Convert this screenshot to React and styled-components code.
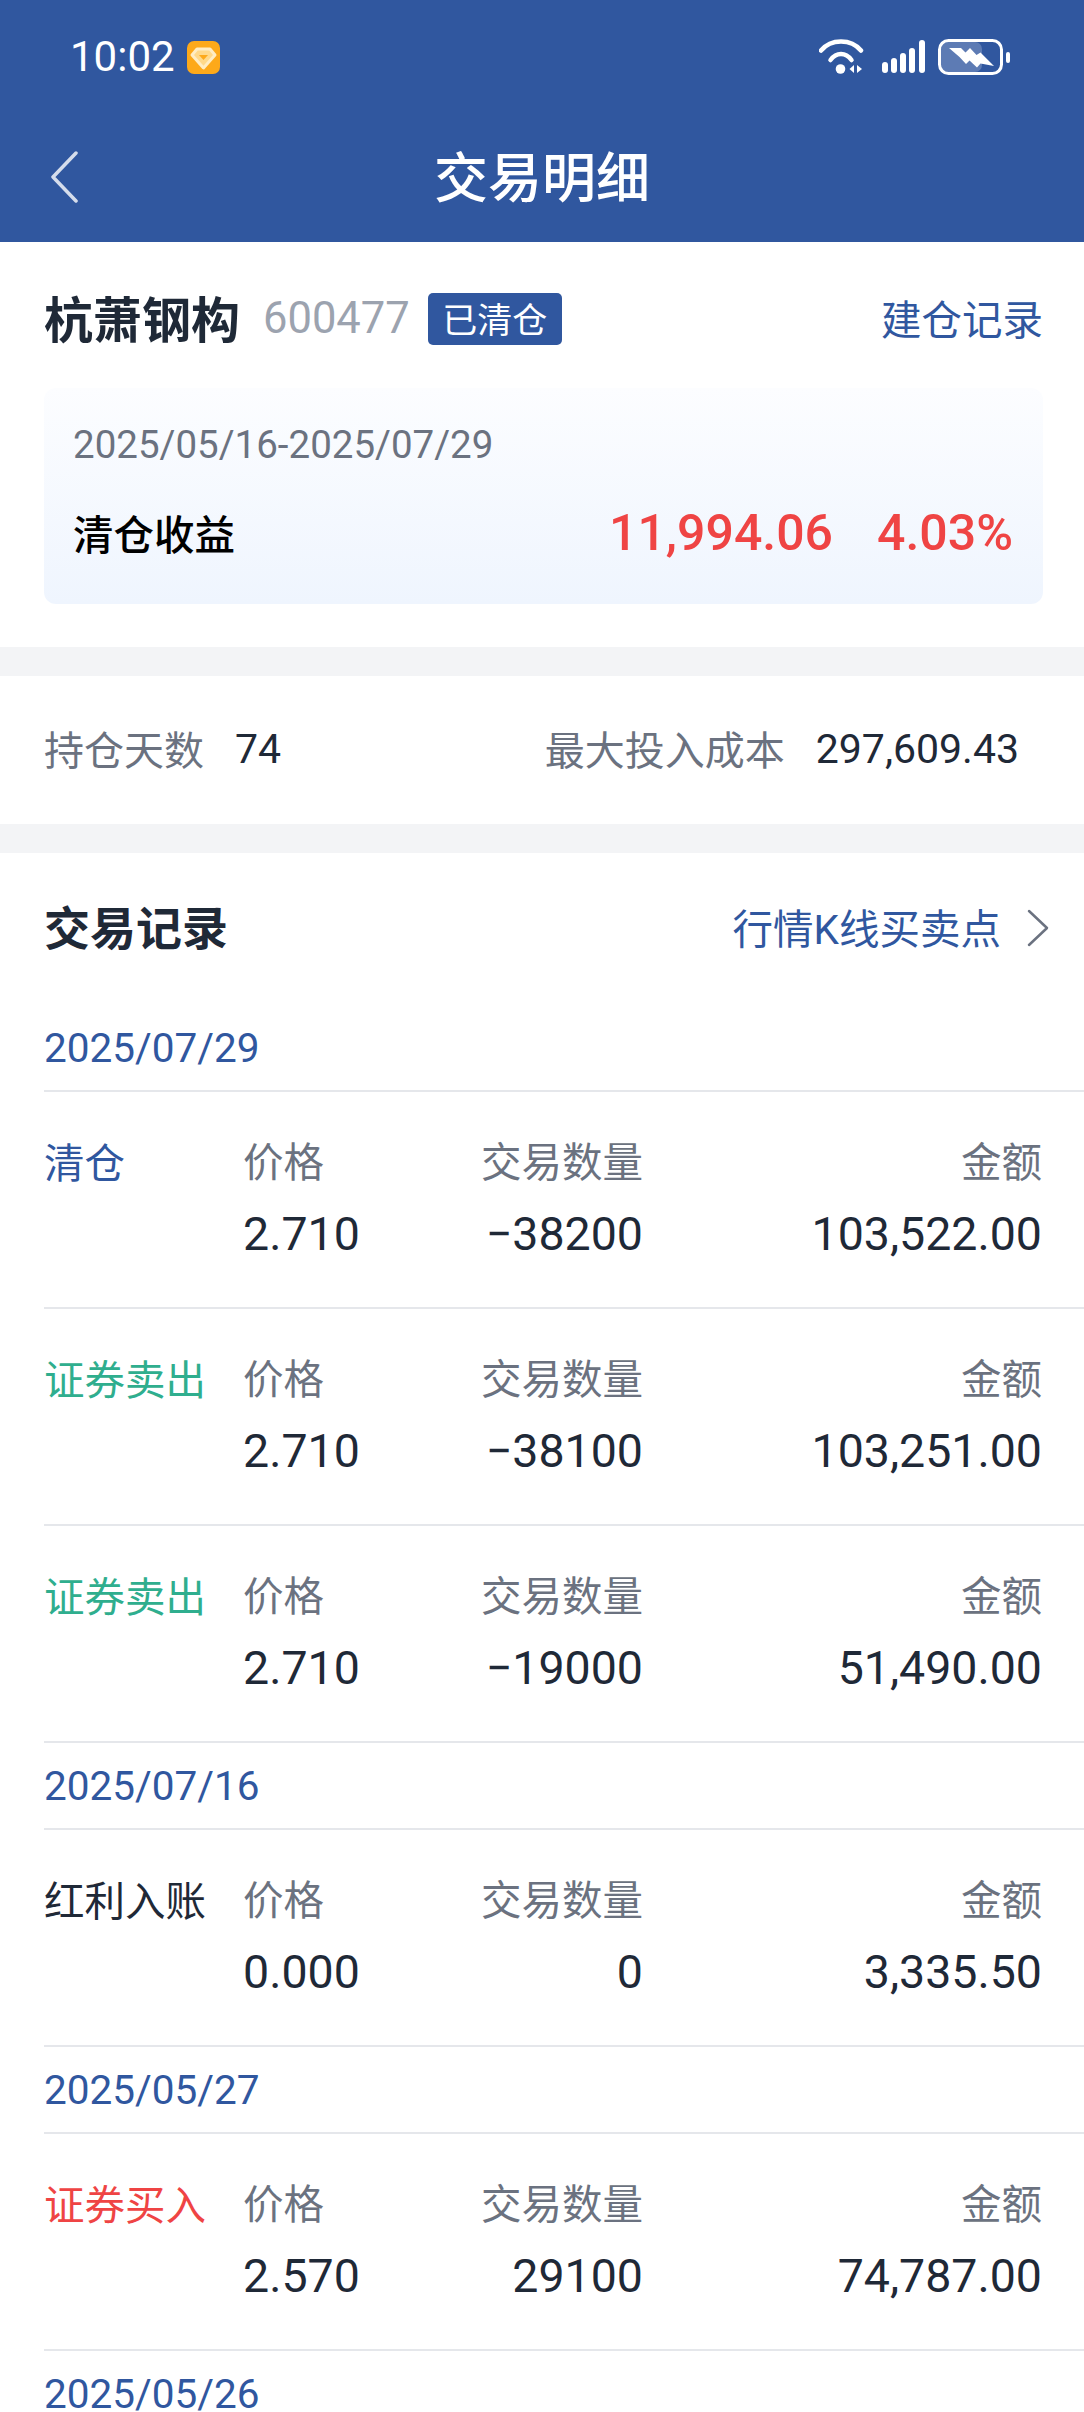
import styled, { createGlobalStyle } from "styled-components";

const BLUE = "#30579f";
const GRAY = "#6b7280";
const DARK = "#1f2937";
const RED = "#ef4444";
const GREEN = "#2fae8e";

const GlobalStyle = createGlobalStyle`
  html, body {
    margin: 0;
    padding: 0;
    background: #fff;
  }
  body {
    font-family: Roboto, "Noto Sans CJK SC", sans-serif;
  }
`;

const Page = styled.div`
  width: 1084px;
  height: 2412px;
  overflow: hidden;
  background: #fff;
`;

const Header = styled.header`
  height: 242px;
  background: ${BLUE};
  color: #fff;
`;

const StatusBar = styled.div`
  height: 114px;
  padding: 0 74px 0 70px;
  box-sizing: border-box;
  display: flex;
  align-items: center;
  justify-content: space-between;
`;

const StatusLeft = styled.div`
  display: flex;
  align-items: center;
  gap: 12px;
`;

const Time = styled.span`
  font-size: 42px;
  line-height: 50px;
`;

const StatusIcons = styled.div`
  display: flex;
  align-items: center;
  gap: 13px;
`;

const NavBar = styled.div`
  height: 126px;
  padding-left: 50px;
  position: relative;
  display: flex;
  align-items: center;
`;

const NavTitle = styled.h1`
  position: absolute;
  left: 0;
  right: 0;
  margin: 0;
  padding-top: 6px;
  text-align: center;
  font-size: 54px;
  line-height: 70px;
  font-weight: 500;
`;

const Summary = styled.section`
  padding: 51px 41px 43px 44px;
`;

const TitleRow = styled.div`
  height: 52px;
  display: flex;
  align-items: center;
`;

const StockName = styled.span`
  margin-bottom: 5px;
  font-size: 49px;
  font-weight: 700;
  color: ${DARK};
`;

const StockCode = styled.span`
  margin-left: 23px;
  margin-bottom: 2px;
  font-size: 43.500px;
  color: #9ca3af;
`;

const StatusTag = styled.span`
  margin-left: 18px;
  width: 134px;
  height: 52px;
  padding-bottom: 4px;
  box-sizing: border-box;
  border-radius: 5px;
  background: ${BLUE};
  color: #fff;
  font-size: 35px;
  display: flex;
  align-items: center;
  justify-content: center;
`;

const RecordLink = styled.span`
  margin-left: auto;
  margin-bottom: 4px;
  font-size: 40.500px;
  color: ${BLUE};
`;

const ProfitCard = styled.div`
  margin-top: 43px;
  height: 216px;
  box-sizing: border-box;
  padding: 35px 30px 0 29px;
  border-radius: 12px;
  background: linear-gradient(180deg, #fcfdff 0%, #eff5fe 100%);
`;

const PeriodText = styled.div`
  font-size: 38.500px;
  line-height: 44px;
  color: ${GRAY};
`;

const ProfitRow = styled.div`
  margin-top: 36px;
  height: 60px;
  display: flex;
  align-items: center;
`;

const ProfitLabel = styled.span`
  margin-bottom: 2px;
  font-size: 40.500px;
  font-weight: 500;
  color: #000;
`;

const ProfitValue = styled.span`
  margin-left: ${(p) => p.$gap};
  font-size: 50px;
  font-weight: 500;
  color: ${RED};
`;

const Band = styled.div`
  height: 29px;
  background: #f3f4f6;
`;

const StatsRow = styled.section`
  height: 148px;
  padding: 0 65px 0 44px;
  display: flex;
  align-items: center;
  justify-content: space-between;
`;

const Stat = styled.div`
  display: flex;
  align-items: center;
  gap: 31px;
`;

const StatLabel = styled.span`
  margin-bottom: 5px;
  font-size: 40px;
  color: ${GRAY};
`;

const StatValue = styled.span`
  margin-bottom: 3px;
  font-size: 41px;
  color: ${DARK};
`;

const RecordsHeader = styled.div`
  height: 152px;
  padding: 0 35px 5px 44px;
  box-sizing: border-box;
  display: flex;
  align-items: center;
  justify-content: space-between;
`;

const RecordsTitle = styled.h2`
  margin: 0 0 3px;
  font-size: 46px;
  font-weight: 700;
  color: ${DARK};
`;

const ChartLink = styled.div`
  display: flex;
  align-items: center;
  gap: 26px;
  font-size: 40.500px;
  color: ${BLUE};

  svg {
    margin-top: 3px;
  }
`;

const DateRow = styled.div`
  height: 87px;
  box-sizing: border-box;
  margin-left: 44px;
  padding-top: 1px;
  border-bottom: 2px solid #e5e7eb;
  display: flex;
  align-items: center;
  font-size: 40.500px;
  color: ${BLUE};
`;

const TradeRow = styled.div`
  height: 217px;
  box-sizing: border-box;
  margin-left: 44px;
  padding: 44px 42px 0 0;
  border-bottom: 2px solid #e5e7eb;
  display: grid;
  grid-template-columns: 199px 120px 280px 1fr;
  grid-auto-rows: 52px;
  row-gap: 20px;
  align-items: center;
`;

const TradeType = styled.div`
  margin-bottom: 3px;
  font-size: 40.500px;
  white-space: nowrap;
  color: ${(p) => p.$color};
`;

const CellLabel = styled.div`
  margin-bottom: 6px;
  font-size: 40.500px;
  color: ${GRAY};
  text-align: ${(p) => (p.$right ? "right" : "left")};
`;

const CellValue = styled.div`
  font-size: 46.500px;
  color: ${DARK};
  white-space: nowrap;
  text-align: ${(p) => (p.$right ? "right" : "left")};
`;

const groups = [
  {
    date: "2025/07/29",
    trades: [
      { type: "清仓", color: BLUE, price: "2.710", qty: "−38200", amount: "103,522.00" },
      { type: "证券卖出", color: GREEN, price: "2.710", qty: "−38100", amount: "103,251.00" },
      { type: "证券卖出", color: GREEN, price: "2.710", qty: "−19000", amount: "51,490.00" },
    ],
  },
  {
    date: "2025/07/16",
    trades: [{ type: "红利入账", color: DARK, price: "0.000", qty: "0", amount: "3,335.50" }],
  },
  {
    date: "2025/05/27",
    trades: [{ type: "证券买入", color: RED, price: "2.570", qty: "29100", amount: "74,787.00" }],
  },
  { date: "2025/05/26", trades: [] },
];

const VipBadge = () => (
  <svg width="33" height="33" viewBox="0 0 33 33">
    <rect width="33" height="33" rx="7" fill="#fda91a" />
    <path d="M10 8h13l5 6-11.500 13L5 14z" fill="#ffd98a" stroke="#ffedc4" strokeWidth="3" strokeLinejoin="round" />
    <path d="M12 14h9l-4.500 5z" fill="#fda91a" />
  </svg>
);

const WifiIcon = () => (
  <svg width="50" height="36" viewBox="0 0 50 36" fill="none">
    <path d="M2 11.500C12-.5 32-.5 42 11.500" stroke="#fff" strokeWidth="4.500" strokeLinecap="round" />
    <path d="M11.500 21C17.500 13 26.500 13 32.500 21" stroke="#fff" strokeWidth="4.500" strokeLinecap="round" />
    <circle cx="21.500" cy="30" r="4.800" fill="#fff" />
    <path d="M35 26v8l-4.500-4zM38 26v8l5-4z" fill="#fff" />
  </svg>
);

const SignalIcon = () => (
  <svg width="43" height="36" viewBox="0 0 43 36" fill="#fff">
    <rect x="0" y="23" width="6" height="11" rx="3" />
    <rect x="9" y="19" width="6" height="15" rx="3" />
    <rect x="18" y="14" width="6" height="20" rx="3" />
    <rect x="27" y="9" width="6" height="25" rx="3" />
    <rect x="37" y="1" width="6" height="33" rx="3" />
  </svg>
);

const BatteryIcon = () => (
  <svg width="72" height="36" viewBox="0 0 72 36" fill="none">
    <rect x="3" y="3" width="41" height="30" rx="7" fill="#fff" fillOpacity=".22" />
    <rect x="1.500" y="1.500" width="62" height="33" rx="9" stroke="#fff" strokeWidth="3" />
    <rect x="68" y="13" width="4" height="11" rx="2" fill="#fff" />
    <path d="M11 9h12l4.500 4.500L32 9l6.500 7 4-2.500L56 27l-13.500-2.500-3.500 4-7.500-7-3.500 3.500-6.500-7z" fill="#fff" />
  </svg>
);

const BackIcon = () => (
  <svg width="28" height="52" viewBox="0 0 28 52" fill="none">
    <path d="M26 2L3 26l23 24" stroke="#fff" strokeOpacity=".8" strokeWidth="3.500" strokeLinecap="round" strokeLinejoin="round" />
  </svg>
);

const ChevronIcon = () => (
  <svg width="22" height="38" viewBox="0 0 22 38" fill="none">
    <path d="M2 2l18 17L2 36" stroke={GRAY} strokeWidth="2.500" strokeLinecap="round" strokeLinejoin="round" />
  </svg>
);

const App = () => {
  return (
    <Page>
      <GlobalStyle />
      <Header>
        <StatusBar>
          <StatusLeft>
            <Time>10:02</Time>
            <VipBadge />
          </StatusLeft>
          <StatusIcons>
            <WifiIcon />
            <SignalIcon />
            <BatteryIcon />
          </StatusIcons>
        </StatusBar>
        <NavBar>
          <BackIcon />
          <NavTitle>交易明细</NavTitle>
        </NavBar>
      </Header>

      <Summary>
        <TitleRow>
          <StockName>杭萧钢构</StockName>
          <StockCode>600477</StockCode>
          <StatusTag>已清仓</StatusTag>
          <RecordLink>建仓记录</RecordLink>
        </TitleRow>
        <ProfitCard>
          <PeriodText>2025/05/16-2025/07/29</PeriodText>
          <ProfitRow>
            <ProfitLabel>清仓收益</ProfitLabel>
            <ProfitValue $gap="auto">11,994.06</ProfitValue>
            <ProfitValue $gap="44px">4.03%</ProfitValue>
          </ProfitRow>
        </ProfitCard>
      </Summary>
      <Band />

      <StatsRow>
        <Stat>
          <StatLabel>持仓天数</StatLabel>
          <StatValue>74</StatValue>
        </Stat>
        <Stat>
          <StatLabel>最大投入成本</StatLabel>
          <StatValue>297,609.43</StatValue>
        </Stat>
      </StatsRow>
      <Band />

      <RecordsHeader>
        <RecordsTitle>交易记录</RecordsTitle>
        <ChartLink>
          行情K线买卖点
          <ChevronIcon />
        </ChartLink>
      </RecordsHeader>

      {groups.map((group) => (
        <div key={group.date}>
          <DateRow>{group.date}</DateRow>
          {group.trades.map((t, i) => (
            <TradeRow key={i}>
              <TradeType $color={t.color}>{t.type}</TradeType>
              <CellLabel>价格</CellLabel>
              <CellLabel $right>交易数量</CellLabel>
              <CellLabel $right>金额</CellLabel>
              <span />
              <CellValue>{t.price}</CellValue>
              <CellValue $right>{t.qty}</CellValue>
              <CellValue $right>{t.amount}</CellValue>
            </TradeRow>
          ))}
        </div>
      ))}
    </Page>
  );
};

export default App;
